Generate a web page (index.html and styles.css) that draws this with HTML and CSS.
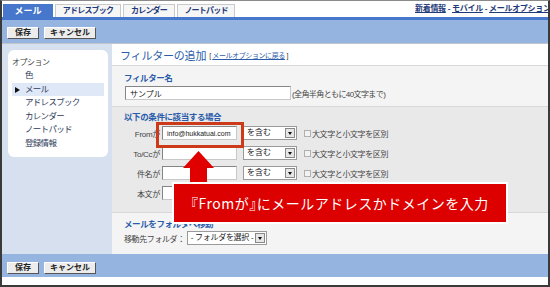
FILE: index.html
```html
<!DOCTYPE html>
<html lang="ja">
<head>
	<meta charset="UTF-8">
	<title>フィルターの追加</title>
	<link rel="stylesheet" href="styles.css">
</head>
<body>
	<div class="frame">
		<div class="topbar">
			<ul class="tabs">
				<li class="tab active w-mail">メール</li>
				<li class="tab w-addr">アドレスブック</li>
				<li class="tab w-cal">カレンダー</li>
				<li class="tab w-note">ノートパッド</li>
			</ul>
			<div class="links"><a href="#">新着情報</a> - <a href="#">モバイル</a> - <a href="#">メールオプション</a></div>
		</div>
		<div class="tabline"></div>
		<div class="toolbar top">
			<button class="btn w-save">保存</button>
			<button class="btn w-cancel">キャンセル</button>
		</div>
		<div class="content">
			<div class="side">
				<div class="menu">
					<div class="menu-title">オプション</div>
					<ul>
						<li>色</li>
						<li class="cur">メール</li>
						<li>アドレスブック</li>
						<li>カレンダー</li>
						<li>ノートパッド</li>
						<li>登録情報</li>
					</ul>
				</div>
			</div>
			<div class="main">
				<div class="head">
					<span class="title">フィルターの追加</span>
					<span class="back">[ <a href="#">メールオプションに戻る</a> ]</span>
				</div>
				<div class="sec sec-name">
					<div class="sec-label">フィルター名</div>
					<div class="name-row">
						<input class="field name-field" type="text" value="サンプル">
						<span class="note">(全角半角ともに40文字まで)</span>
					</div>
				</div>
				<div class="sec sec-cond">
					<div class="sec-label">以下の条件に該当する場合</div>
					<div class="row">
						<span class="lbl">Fromが</span>
						<input class="field cond-field small" type="text" value="info@hukkatuai.com">
						<span class="select w-match">を含む<i class="arrow"></i></span>
						<input class="check" type="checkbox">
						<span class="check-text">大文字と小文字を区別</span>
					</div>
					<div class="row">
						<span class="lbl">To/Ccが</span>
						<input class="field cond-field" type="text">
						<span class="select w-match">を含む<i class="arrow"></i></span>
						<input class="check" type="checkbox">
						<span class="check-text">大文字と小文字を区別</span>
					</div>
					<div class="row">
						<span class="lbl">件名が</span>
						<input class="field cond-field" type="text">
						<span class="select w-match">を含む<i class="arrow"></i></span>
						<input class="check" type="checkbox">
						<span class="check-text">大文字と小文字を区別</span>
					</div>
					<div class="row">
						<span class="lbl">本文が</span>
						<input class="field cond-field" type="text">
						<span class="select w-match">を含む<i class="arrow"></i></span>
						<input class="check" type="checkbox">
						<span class="check-text">大文字と小文字を区別</span>
					</div>
				</div>
				<div class="sec sec-move">
					<div class="sec-label">メールをフォルダへ移動</div>
					<div class="move-row">
						<span>移動先フォルダ：</span>
						<span class="select w-folder">- フォルダを選択 -<i class="arrow"></i></span>
					</div>
				</div>
			</div>
		</div>
		<div class="toolbar bottom">
			<button class="btn w-save">保存</button>
			<button class="btn w-cancel">キャンセル</button>
		</div>

		<div class="ring"></div>
		<svg class="arrow-up" width="33" height="36" viewBox="0 0 33 36">
			<polygon points="16.5,1 32,18 25,18 25,36 8,36 8,18 1,18" fill="#e10000"/>
		</svg>
		<div class="callout"><span class="br">『</span>Fromが<span class="br">』</span>にメールアドレスかドメインを入力</div>
	</div>
</body>
</html>
```

FILE: styles.css
```css
* {
	box-sizing: border-box;
}

body {
	margin: 0;
	font-family: "Liberation Sans", "Noto Sans CJK JP", sans-serif;
	font-size: 8px;
	color: #333;
}

.frame {
	position: relative;
	width: 550px;
	height: 287px;
	border: 2px solid #3a3a3a;
	border-top: 1px solid #8a8a8a;
	background: #fff;
	overflow: hidden;
}

/* tabs */
.topbar {
	display: flex;
	align-items: flex-end;
	height: 16px;
	padding-left: 1px;
	overflow: hidden;
}

.tabs {
	display: flex;
	gap: 2px;
	margin: 0;
	padding: 0;
	list-style: none;
}

.tab {
	height: 13px;
	line-height: 12px;
	text-align: center;
	font-weight: bold;
	font-size: 8px;
	letter-spacing: -0.8px;
	color: #1f3a78;
	background: #f6f6f6;
	border: 1px solid #c9c9c9;
	border-bottom: none;
}

.tab.active {
	background: #4677cc;
	border-color: #4677cc;
	color: #fff;
	font-size: 9px;
	letter-spacing: 0;
}

.w-mail { width: 50px; }
.w-addr { width: 66px; }
.w-cal { width: 52px; }
.w-note { width: 58px; }

.links {
	align-self: center;
	margin-left: 180px;
	white-space: nowrap;
	font-weight: bold;
	font-size: 8px;
	letter-spacing: -0.3px;
	color: #1f3a78;
	line-height: 12px;
}

.links a {
	color: #1f3a78;
}

.tabline {
	height: 3px;
	background: #4677cc;
}

/* toolbars */
.toolbar {
	display: flex;
	gap: 5px;
	align-items: flex-start;
	height: 23px;
	padding: 7px 0 0 5px;
	background: #95b4df;
}

.toolbar.top {
	height: 24px;
	border-bottom: 1px solid #c3c6cc;
}

.toolbar.bottom {
	padding-top: 8px;
}

.btn {
	height: 12px;
	padding: 0;
	font-family: inherit;
	font-size: 8px;
	font-weight: bold;
	line-height: 10px;
	color: #222;
	background: #ececec;
	border: 1px solid;
	border-color: #fff #555 #555 #fff;
}

.w-save { width: 32px; }
.w-cancel { width: 52px; }

/* content */
.content {
	display: flex;
	height: 210px;
}

.side {
	width: 110px;
	padding: 6px 0 0 6px;
	background: #d6e0ef;
}

.menu {
	width: 100px;
	height: 107px;
	padding-top: 7px;
	background: #fff;
	border-radius: 6px;
}

.menu-title {
	padding-left: 4px;
	line-height: 12px;
	color: #444;
	letter-spacing: -0.5px;
}

.menu ul {
	margin: 0;
	padding: 0;
	list-style: none;
}

.menu li {
	position: relative;
	padding-left: 17px;
	line-height: 13.5px;
	font-size: 8.5px;
	color: #2f3c5c;
	letter-spacing: -0.7px;
}

.menu li.cur {
	margin: 0 4px;
	padding-left: 13px;
	background: #dfe8f6;
}

.menu li.cur::before {
	content: "";
	position: absolute;
	left: 3px;
	top: 4px;
	border-left: 5px solid #111;
	border-top: 3px solid transparent;
	border-bottom: 3px solid transparent;
}

.main {
	flex: 1;
	display: flex;
	flex-direction: column;
}

.head {
	display: flex;
	align-items: center;
	gap: 3px;
	height: 21px;
	padding-left: 8px;
	background: #fff;
}

.title {
	font-size: 11px;
	color: #2a5caa;
	letter-spacing: -0.2px;
}

.back {
	font-size: 7px;
	color: #333;
	letter-spacing: -0.4px;
}

.back a {
	color: #2a5caa;
}

.sec {
	padding-left: 12px;
	border-top: 1px solid #d8d8d8;
}

.sec-label {
	line-height: 12px;
	font-size: 8.5px;
	font-weight: bold;
	color: #2a5caa;
	letter-spacing: -0.4px;
}

.sec-name {
	height: 41px;
	padding-top: 6px;
	background: #f4f4f4;
}

.name-row {
	display: flex;
	align-items: center;
	margin-top: 2px;
}

.field {
	height: 14px;
	padding: 0 4px;
	font-family: inherit;
	font-size: 8px;
	color: #222;
	background: #fff;
	border: 1px solid;
	border-color: #858585 #c8c8c8 #c8c8c8 #858585;
	outline: none;
}

.name-field {
	width: 166px;
	margin-left: 1px;
}

.note {
	margin-left: 1px;
	letter-spacing: -0.6px;
	color: #444;
}

.sec-cond {
	height: 106px;
	padding-top: 4px;
	background: #e9e9e9;
}

.row {
	display: flex;
	align-items: center;
	height: 20px;
}

.lbl {
	width: 36px;
	margin-right: 2px;
	text-align: right;
	color: #444;
	letter-spacing: -0.3px;
}

.cond-field {
	width: 75px;
}

.cond-field.small {
	font-size: 7px;
}

.select {
	position: relative;
	display: inline-block;
	height: 14px;
	padding-left: 3px;
	line-height: 12px;
	color: #222;
	background: #fff;
	border: 1px solid #9a9a9a;
	white-space: nowrap;
}

.w-match {
	width: 54px;
	margin-left: 6px;
}

.w-folder {
	width: 80px;
	margin-left: 2px;
	letter-spacing: -0.3px;
}

.select .arrow {
	position: absolute;
	right: 1px;
	top: 1px;
	width: 10px;
	height: 10px;
	background: #e6e6e6;
	border: 1px solid #888;
}

.select .arrow::after {
	content: "";
	position: absolute;
	left: 2px;
	top: 3px;
	border-top: 3px solid #111;
	border-left: 2px solid transparent;
	border-right: 2px solid transparent;
}

.check {
	appearance: none;
	width: 7px;
	height: 7px;
	margin: 0 1px 0 7px;
	background: #f2f2f2;
	border: 1px solid #b0b0b0;
}

.check-text {
	color: #444;
	letter-spacing: -0.4px;
}

.sec-move {
	height: 42px;
	padding-top: 5px;
	background: #f4f4f4;
}

.move-row {
	display: flex;
	align-items: center;
	margin-top: 1px;
	color: #444;
	letter-spacing: -0.4px;
}

/* annotation overlay */
.ring {
	position: absolute;
	left: 154px;
	top: 121px;
	width: 88px;
	height: 26px;
	border: 3px solid #cc3a1a;
}

.arrow-up {
	position: absolute;
	left: 180px;
	top: 149px;
}

.callout {
	position: absolute;
	left: 170px;
	top: 181px;
	width: 336px;
	height: 42px;
	padding-left: 17px;
	line-height: 38px;
	font-family: "Noto Sans CJK JP", sans-serif;
	font-size: 14px;
	letter-spacing: 0.5px;
	color: #fff;
	background: #dd0000;
	border: 2px solid #fff;
	white-space: nowrap;
}

.callout .br {
	font-feature-settings: "halt";
}
```
